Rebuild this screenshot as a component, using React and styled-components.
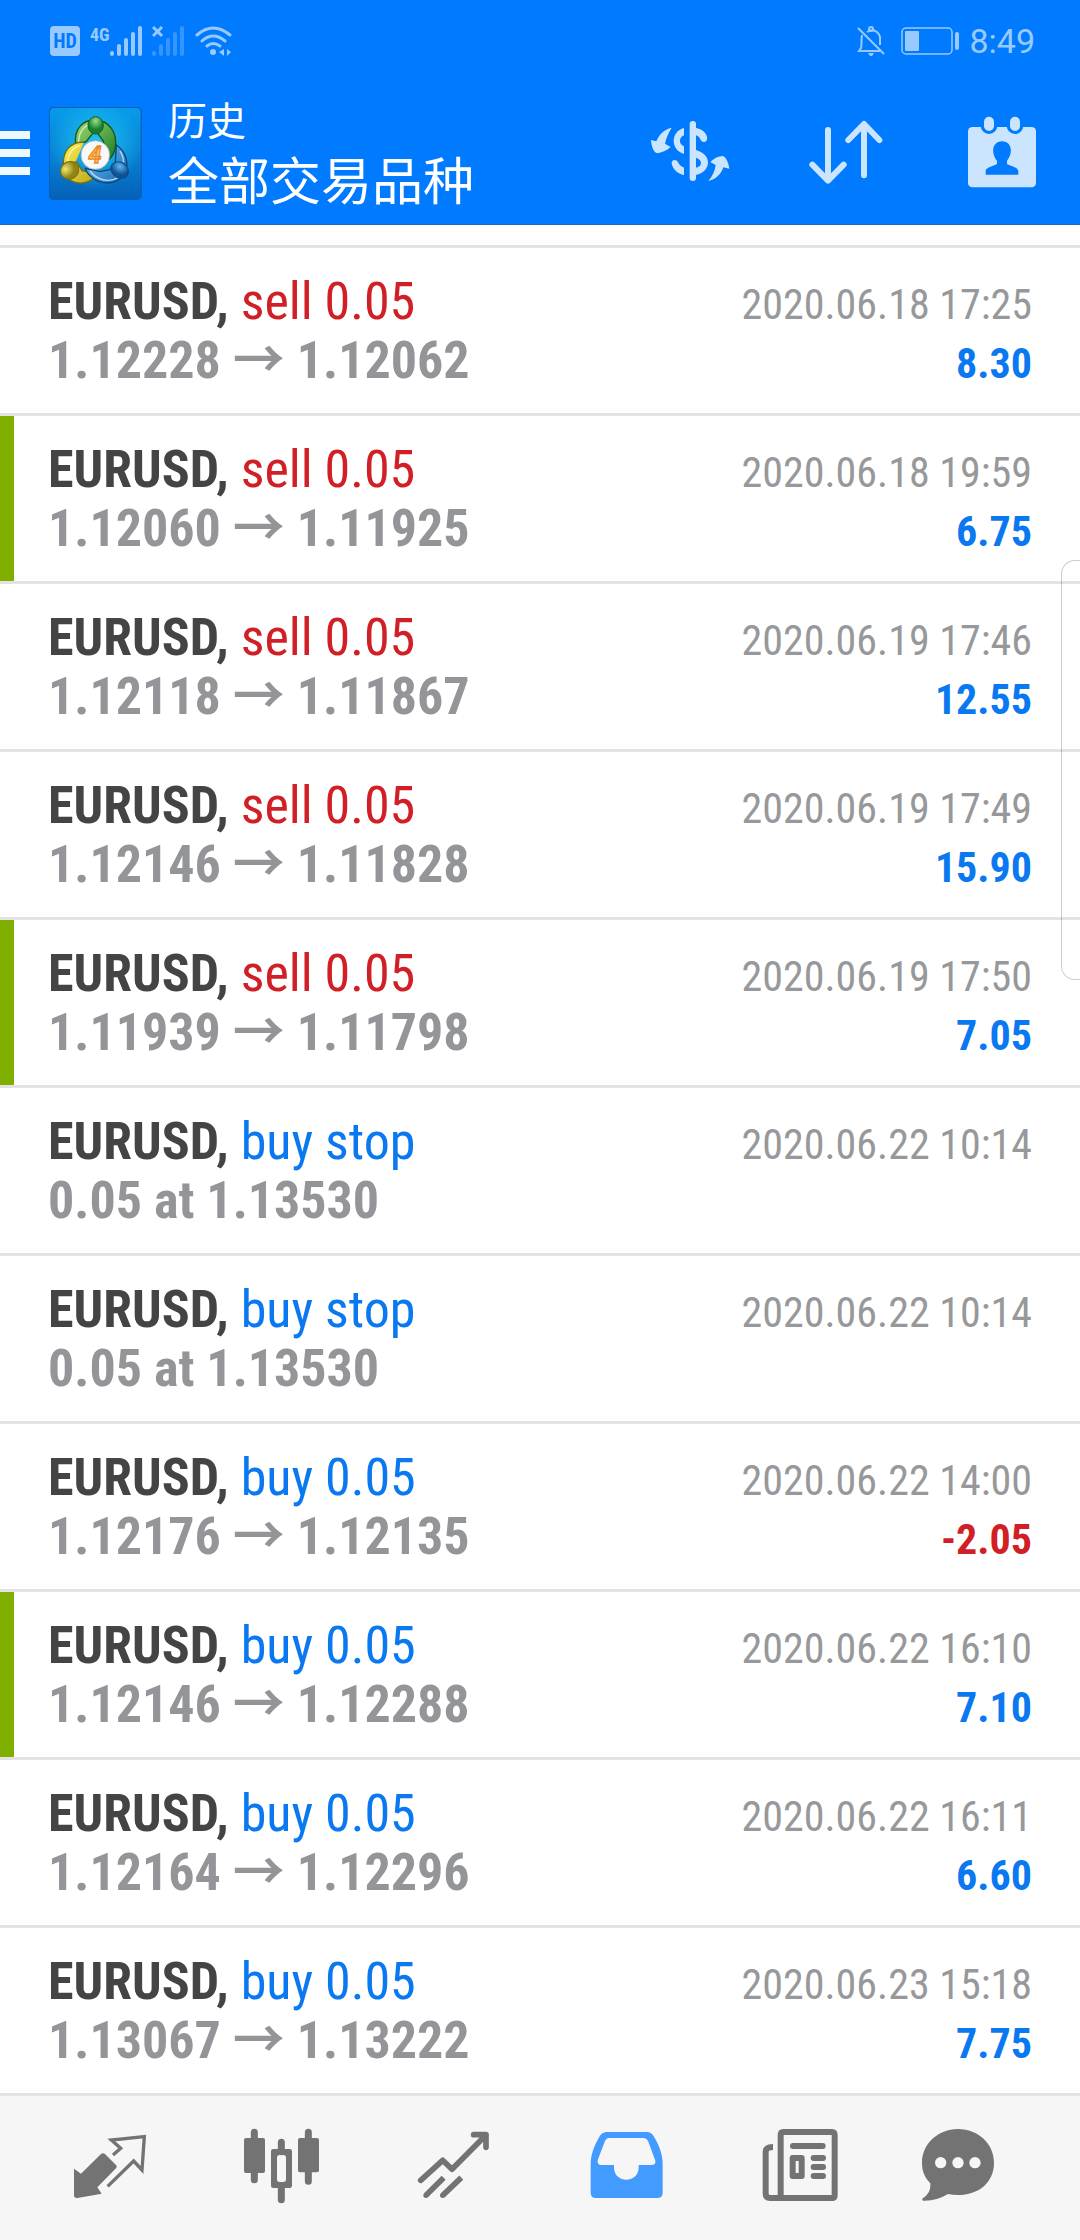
import React from "react";
import styled, { createGlobalStyle } from "styled-components";

const GlobalStyle = createGlobalStyle`
  * { box-sizing: border-box; }
  body {
    margin: 0;
    background: #fff;
    font-family: "Roboto Condensed", "Liberation Sans Narrow", "Noto Sans CJK SC", sans-serif;
  }
  button { border: 0; padding: 0; background: none; font: inherit; cursor: pointer; }
  svg { display: block; }
`;

const Screen = styled.div`
  position: relative;
  display: flex;
  flex-direction: column;
  min-height: 100vh;
`;

const Header = styled.header`
  background: #007aff;
  border-bottom: 1px solid #1a6bc4;
`;

const StatusBar = styled.div`
  display: flex;
  align-items: center;
  justify-content: space-between;
  height: 82px;
  padding: 0 45px 0 50px;
  color: #99caff;
`;

const StatusGroup = styled.div`
  display: flex;
  align-items: center;
  gap: ${(p) => p.$gap}px;
`;

const HdBadge = styled.span`
  width: 30px;
  height: 30px;
  border-radius: 4px;
  background: #99caff;
  color: #007aff;
  font: 700 20px/30px "Roboto Condensed", sans-serif;
  text-align: center;
`;

const Signal = styled.span`
  display: flex;
  align-items: flex-start;
  height: 30px;
`;

const NetworkType = styled.span`
  font-size: 18px;
  line-height: 18px;
  font-weight: 700;
`;

const Clock = styled.time`
  font: 400 34px/40px Roboto, sans-serif;
`;

const Toolbar = styled.div`
  display: flex;
  align-items: center;
  height: 142px;
`;

const MenuButton = styled.button`
  display: flex;
  flex-direction: column;
  gap: 10px;
  width: 30px;
  margin-right: 19px;
`;

const MenuLine = styled.span`
  height: 8px;
  background: #f0f8ff;
`;

const Titles = styled.div`
  flex: 1;
  padding: 0 0 4px 26px;
  color: #fff;
  font-family: "Noto Sans CJK SC", sans-serif;
`;

const Title = styled.h1`
  margin: 0;
  font-size: 39px;
  line-height: 54px;
  font-weight: 400;
`;

const Subtitle = styled.p`
  margin: 0;
  font-size: 51px;
  line-height: 66px;
`;

const ToolButton = styled.button`
  display: grid;
  place-items: center;
  width: 156px;
  height: 142px;
  color: #cce5ff;
`;

const History = styled.main`
  flex: 1;
  padding-top: 20px;
`;

const DealList = styled.ul`
  margin: 0;
  padding: 0;
  list-style: none;
  border-top: 3px solid #e3e3e3;
`;

const Deal = styled.li`
  display: flex;
  min-height: 168px;
  padding-right: 48px;
  border-bottom: 3px solid #e3e3e3;
`;

const Marker = styled.span`
  flex: none;
  width: 14px;
  margin-right: 34px;
  background: ${(p) => (p.$on ? "#7fb000" : "transparent")};
`;

const DealBody = styled.div`
  flex: 1;
  padding-top: 24px;
`;

const Line = styled.div`
  display: flex;
  align-items: baseline;
  justify-content: space-between;
  height: 59px;
  font-size: 52px;
  line-height: 59px;
  white-space: nowrap;
`;

const tones = { blue: "#0a78f0", red: "#d11f26" };

const Symbol = styled.b`
  color: #444;
`;

const Action = styled.span`
  color: ${(p) => tones[p.$tone]};
`;

const Prices = styled.span`
  color: #949599;
  font-weight: 700;
`;

const DateTime = styled.time`
  color: #97989a;
  font-size: 42px;
`;

const Profit = styled.b`
  color: ${(p) => tones[p.$tone]};
  font-size: 42px;
`;

const EdgePanel = styled.div`
  position: absolute;
  top: 560px;
  right: 0;
  width: 19px;
  height: 420px;
  border: 1px solid rgba(0, 0, 0, 0.2);
  border-right: 0;
  border-radius: 14px 0 0 14px;
`;

const Nav = styled.nav`
  display: flex;
  height: 144px;
  padding: 0 24px;
  background: #f6f6f6;
`;

const NavButton = styled.button`
  flex: 1;
  display: grid;
  place-items: center;
  color: ${(p) => (p.$active ? "#449bff" : "#737373")};
`;

const ToolIcon = ({ x, children }) => (
  <svg width="80" height="80" viewBox={`${x} 39 240 240`} fill="currentColor" aria-hidden="true">{children}</svg>
);

const NavIcon = ({ x, children }) => (
  <svg width="96" height="96" viewBox={`${x} 120 288 288`} fill="currentColor" aria-hidden="true">{children}</svg>
);

const SignalBars = () => (
  <svg width="32" height="30" viewBox="0 0 32 30" fill="none" stroke="currentColor" strokeWidth="4" strokeLinecap="round">
    <path d="M2 27V28M9 20V28M16 14V28M23 8V28M30 2V28" />
  </svg>
);

const NoSimBars = () => (
  <svg width="33" height="30" viewBox="0 0 33 30" fill="none" stroke="currentColor">
    <path d="M2 27V28M9 20V28M16 14V28M23 8V28M30 2V28" strokeWidth="4" strokeLinecap="round" opacity=".35" />
    <path d="M1 1L10 10M10 1L1 10" strokeWidth="3" />
  </svg>
);

const WifiIcon = () => (
  <svg width="37" height="31" viewBox="0 0 37 31" fill="none" stroke="currentColor" strokeWidth="3" strokeLinecap="round">
    <path d="M2 9Q18 -5 35 9M7 15Q18 5 30 15M12 20Q18 15 25 20" />
    <circle cx="18" cy="26" r="3" fill="currentColor" stroke="none" />
    <path d="M29 23V30L24 26ZM32 23V30L36 26Z" fill="currentColor" stroke="none" />
  </svg>
);

const MutedBell = () => (
  <svg width="28" height="31" viewBox="0 0 28 31" fill="none" stroke="currentColor" strokeWidth="2">
    <path d="M1 2L27 28M10 6C18 1 24 8 23 15V19M5 9C4 14 5 19 4 22L2 25H23" />
    <circle cx="14" cy="3" r="2" />
    <path d="M11 27H17L15 30H13Z" fill="currentColor" stroke="none" />
  </svg>
);

const Battery = () => (
  <svg width="58" height="28" viewBox="0 0 58 28" fill="currentColor">
    <rect x="1" y="1" width="50" height="26" rx="4" fill="none" stroke="currentColor" strokeWidth="1.5" />
    <rect x="4" y="4" width="14" height="20" rx="1" />
    <rect x="54" y="5" width="4" height="18" rx="2" />
  </svg>
);

const Logo = () => (
  <svg width="93" height="93" viewBox="27 48 279 279" role="img" aria-label="MetaTrader 4">
    <defs>
      <linearGradient id="tile" x2="0" y2="1">
        <stop stopColor="#079bea" /><stop offset=".5" stopColor="#0783d5" /><stop offset="1" stopColor="#0560b8" />
      </linearGradient>
      <radialGradient id="tileGlow" cy=".4" r=".5">
        <stop stopColor="#20c5ee" /><stop offset="1" stopColor="#20c5ee" stopOpacity="0" />
      </radialGradient>
      <linearGradient id="green" x2="1" y2="1"><stop stopColor="#a5dc72" /><stop offset="1" stopColor="#177c23" /></linearGradient>
      <linearGradient id="yellow" x2="1" y2="1"><stop stopColor="#fff250" /><stop offset="1" stopColor="#b9a31a" /></linearGradient>
      <linearGradient id="blue" x2="1" y2="1"><stop stopColor="#75c7f5" /><stop offset="1" stopColor="#1468b5" /></linearGradient>
      <radialGradient id="greenBall" cy=".25"><stop stopColor="#9ade8d" /><stop offset="1" stopColor="#16802c" /></radialGradient>
      <radialGradient id="yellowBall" cx=".35" cy=".3"><stop stopColor="#f0ea70" /><stop offset="1" stopColor="#8f8415" /></radialGradient>
      <radialGradient id="blueBall" cx=".4" cy=".3"><stop stopColor="#62b8ef" /><stop offset="1" stopColor="#0e5396" /></radialGradient>
    </defs>
    <rect x="28" y="49" width="276" height="276" rx="13" fill="url(#tile)" stroke="#0a62b5" strokeWidth="4" />
    <rect x="30" y="51" width="272" height="272" rx="12" fill="url(#tileGlow)" />
    <path d="M66 54V320M106 54V320M146 54V320M186 54V320M226 54V320M266 54V320M32 92H300M32 132H300M32 172H300M32 212H300M32 252H300M32 292H300" stroke="#fff" strokeOpacity=".07" />
    <path fillRule="evenodd" d="M107 162C100 112 131 86 166 87C208 88 233 126 226 170C224 185 216 198 205 207L190 150L166 117L139 151Z" fill="url(#green)" stroke="#14571e" strokeWidth="4" />
    <path d="M132 154C94 151 69 178 70 219L110 213L126 239L171 247C157 278 115 286 86 263" fill="url(#yellow)" stroke="#756b0c" strokeWidth="4" />
    <path d="M229 162C253 179 263 201 260 231C252 276 195 289 157 260C145 251 139 242 136 232L180 242L209 236L226 214Z" fill="url(#blue)" stroke="#09467f" strokeWidth="4" />
    <path d="M116 153C116 119 138 101 150 102M83 211C85 186 99 169 119 164M150 240C173 270 210 276 236 258M240 180Q252 200 250 214" fill="none" stroke="#fff" strokeOpacity=".65" strokeWidth="4" />
    <ellipse cx="167" cy="103" rx="23" ry="26" fill="url(#greenBall)" stroke="#155c27" strokeWidth="3" />
    <ellipse cx="89" cy="238" rx="28" ry="26" transform="rotate(-35 89 238)" fill="url(#yellowBall)" stroke="#776d10" strokeWidth="3" />
    <ellipse cx="239" cy="237" rx="28" ry="23" transform="rotate(35 239 237)" fill="url(#blueBall)" stroke="#0b4a87" strokeWidth="3" />
    <circle cx="166" cy="192" r="43" fill="#f8f8fb" stroke="#9ba6ad" strokeWidth="2" />
    <text x="165" y="217" textAnchor="middle" fontFamily="Roboto" fontSize="70" fontWeight="700" fontStyle="italic" fill="#ffc66e" stroke="#ec8a28" strokeWidth="4">4</text>
  </svg>
);

const tools = [
  {
    label: "Deals", x: 30, art: (
      <>
        <rect x="149" y="63" width="19" height="180" rx="9" />
        <path d="M132 84C91 94 91 150 132 162V139C116 133 116 112 132 106Z" />
        <path d="M132 225V203C123 199 118 195 114 187C109 175 93 179 95 191C99 208 113 221 132 225Z" />
        <path d="M168 84C186 87 197 97 201 110C205 127 186 132 181 118C179 112 175 108 168 106Z" />
        <path fillRule="evenodd" d="M168 150C189 157 204 169 204 187C204 207 189 221 168 225ZM168 173V203C188 200 188 179 168 173Z" />
        <path d="M95 83C72 88 57 104 49 124L33 120C34 136 40 156 51 160C65 158 80 152 92 141L75 131C79 113 85 99 95 83Z" />
        <path d="M205 243C230 237 243 222 250 202L268 206C266 190 259 172 249 168C236 168 222 175 211 186L227 195C225 212 218 228 205 243Z" />
      </>
    ),
  },
  {
    label: "Sort", x: 498, art: (
      <path d="M564 90V240M517 194L564 242L611 194M672 226V74M625 120L672 72L718 120" fill="none" stroke="currentColor" strokeWidth="18" strokeLinecap="round" strokeLinejoin="round" />
    ),
  },
  {
    label: "Period", x: 966, art: (
      <>
        <rect x="984" y="81" width="204" height="181" rx="13" />
        <path d="M1047 66V77M1125 66V77" stroke="#007aff" strokeWidth="50" strokeLinecap="round" />
        <path d="M1047 65V78M1125 65V78" stroke="currentColor" strokeWidth="30" strokeLinecap="round" />
        <path d="M1086 124C1105 124 1115 139 1112 158C1110 169 1105 177 1101 182V192C1112 199 1135 201 1135 214V224H1037V214C1037 201 1060 199 1071 192V182C1066 176 1062 169 1060 158C1057 139 1068 124 1086 124Z" fill="#007aff" />
      </>
    ),
  },
];

const stroke = { fill: "none", stroke: "currentColor", strokeLinecap: "round", strokeLinejoin: "round" };

const tabs = [
  {
    label: "Quotes", x: 186, art: (
      <>
        <path d="M222 266L243 281L303 222Q309 217 315 222L348 255Q353 260 348 265L292 322L305 341L232 354Q222 355 222 346Z" />
        <path d="M339 225L362 205L334 180L433 170L426 270L401 243L323 319" {...stroke} strokeLinecap="butt" strokeLinejoin="miter" strokeWidth="10" />
      </>
    ),
  },
  {
    label: "Charts", x: 702, art: (
      <>
        <path d="M763 157V299M925 157V304M844 187V215M844 320V359" {...stroke} strokeWidth="21" />
        <rect x="732" y="174" width="63" height="105" rx="6" />
        <rect x="894" y="174" width="63" height="103" rx="6" />
        <path fillRule="evenodd" d="M820 207H869Q876 207 876 214V317Q876 324 869 324H820Q813 324 813 317V214Q813 207 820 207ZM839 225Q831 225 831 233V298Q831 306 839 306H850Q858 306 858 298V233Q858 225 850 225Z" />
      </>
    ),
  },
  {
    label: "Trade", x: 138, art: (
      <>
        <path d="M182 301L248 241L276 268L378 165M341 164H378V202" {...stroke} strokeWidth="17" />
        <path d="M198 346L251 293M248 346L304 293" {...stroke} strokeLinecap="butt" strokeWidth="17" />
        <circle cx="198" cy="346" r="8" /><circle cx="248" cy="346" r="8" />
      </>
    ),
  },
  {
    label: "History", x: 654, active: true, art: (
      <path fillRule="evenodd" d="M740 156H861Q873 156 880 167C895 190 908 220 908 252V338Q908 354 892 354H708Q692 354 692 338V252C692 220 706 190 720 167Q728 156 740 156ZM748 174Q739 174 735 183L713 241Q711 255 724 255H762V264C764 311 834 311 836 264V255H874Q888 255 886 242L865 185Q860 174 850 174Z" />
    ),
  },
  {
    label: "News", x: 90, art: (
      <>
        <path d="M150 354H337Q344 354 344 345V165Q344 156 336 156H190Q182 156 182 165V354M159 201Q137 201 137 216V340Q137 354 150 354H174" {...stroke} strokeLinecap="butt" strokeWidth="18" />
        <path d="M219 198H308M281 234H309M281 261H309M281 288H309" {...stroke} strokeWidth="18" />
        <rect x="218" y="234" width="27" height="54" {...stroke} strokeWidth="18" />
      </>
    ),
  },
  {
    label: "Messages", x: 606, art: (
      <>
        <path d="M714 147C775 147 822 192 822 248C822 308 775 345 714 345Q698 345 684 342C660 357 635 363 610 362Q605 361 608 355C627 343 632 328 631 310C613 291 606 272 606 248C606 192 654 147 714 147Z" />
        <g fill="#f6f6f6"><circle cx="662" cy="248" r="17" /><circle cx="714" cy="248" r="17" /><circle cx="765" cy="248" r="17" /></g>
      </>
    ),
  },
];

const deals = [
  { action: "sell 0.05", prices: "1.12228 → 1.12062", time: "2020.06.18 17:25", profit: "8.30" },
  { action: "sell 0.05", prices: "1.12060 → 1.11925", time: "2020.06.18 19:59", profit: "6.75", marked: true },
  { action: "sell 0.05", prices: "1.12118 → 1.11867", time: "2020.06.19 17:46", profit: "12.55" },
  { action: "sell 0.05", prices: "1.12146 → 1.11828", time: "2020.06.19 17:49", profit: "15.90" },
  { action: "sell 0.05", prices: "1.11939 → 1.11798", time: "2020.06.19 17:50", profit: "7.05", marked: true },
  { action: "buy stop", prices: "0.05 at 1.13530", time: "2020.06.22 10:14" },
  { action: "buy stop", prices: "0.05 at 1.13530", time: "2020.06.22 10:14" },
  { action: "buy 0.05", prices: "1.12176 → 1.12135", time: "2020.06.22 14:00", profit: "-2.05" },
  { action: "buy 0.05", prices: "1.12146 → 1.12288", time: "2020.06.22 16:10", profit: "7.10", marked: true },
  { action: "buy 0.05", prices: "1.12164 → 1.12296", time: "2020.06.22 16:11", profit: "6.60" },
  { action: "buy 0.05", prices: "1.13067 → 1.13222", time: "2020.06.23 15:18", profit: "7.75" },
];

export default function App() {
  return (
    <Screen>
      <GlobalStyle />
      <Header>
        <StatusBar>
          <StatusGroup $gap={10}>
            <HdBadge>HD</HdBadge>
            <Signal><NetworkType>4G</NetworkType><SignalBars /></Signal>
            <NoSimBars />
            <WifiIcon />
          </StatusGroup>
          <StatusGroup $gap={16}>
            <MutedBell />
            <StatusGroup $gap={10}>
              <Battery />
              <Clock>8:49</Clock>
            </StatusGroup>
          </StatusGroup>
        </StatusBar>
        <Toolbar>
          <MenuButton aria-label="Menu"><MenuLine /><MenuLine /><MenuLine /></MenuButton>
          <Logo />
          <Titles>
            <Title>历史</Title>
            <Subtitle>全部交易品种</Subtitle>
          </Titles>
          {tools.map((t) => (
            <ToolButton key={t.label} aria-label={t.label}><ToolIcon x={t.x}>{t.art}</ToolIcon></ToolButton>
          ))}
        </Toolbar>
      </Header>
      <History>
        <DealList>
          {deals.map((d, i) => (
            <Deal key={i}>
              <Marker $on={d.marked} />
              <DealBody>
                <Line>
                  <span>
                    <Symbol>EURUSD,</Symbol>{" "}
                    <Action $tone={d.action.startsWith("sell") ? "red" : "blue"}>{d.action}</Action>
                  </span>
                  <DateTime>{d.time}</DateTime>
                </Line>
                <Line>
                  <Prices>{d.prices}</Prices>
                  {d.profit && <Profit $tone={d.profit.startsWith("-") ? "red" : "blue"}>{d.profit}</Profit>}
                </Line>
              </DealBody>
            </Deal>
          ))}
        </DealList>
      </History>
      <Nav>
        {tabs.map((t) => (
          <NavButton key={t.label} aria-label={t.label} $active={t.active}><NavIcon x={t.x}>{t.art}</NavIcon></NavButton>
        ))}
      </Nav>
      <EdgePanel />
    </Screen>
  );
}
